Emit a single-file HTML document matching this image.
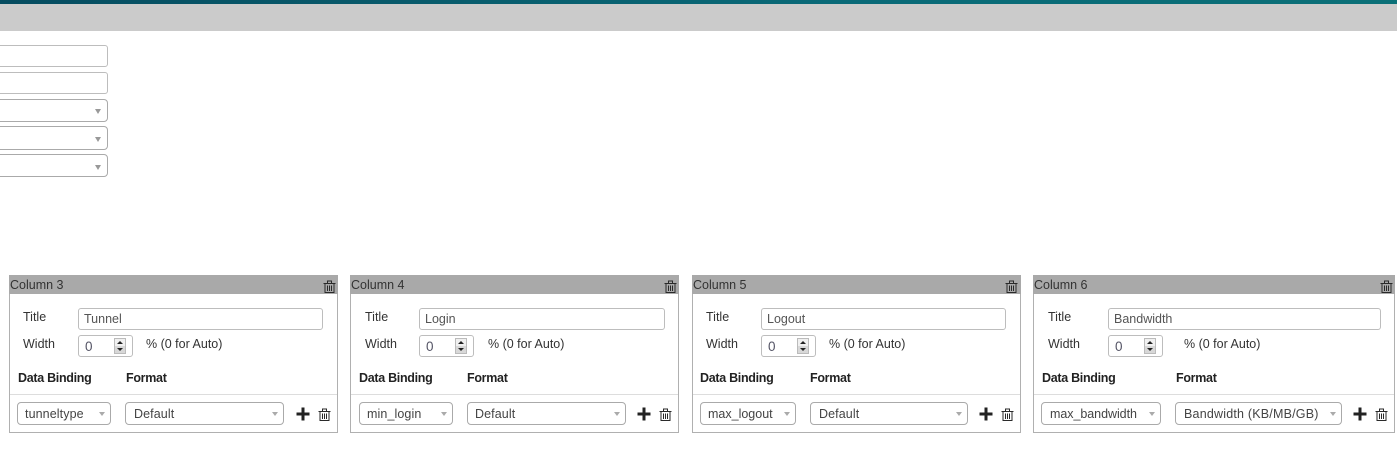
<!DOCTYPE html>
<html><head><meta charset="utf-8"><style>
html,body{margin:0;padding:0;background:#fff;width:1397px;height:473px;overflow:hidden}
body{position:relative;font-family:"Liberation Sans",sans-serif;font-size:12.5px;color:#444}
.a{position:absolute;box-sizing:border-box}
.box{border:1px solid #bdbdbd;border-radius:3px;background:#fff}
.sel{border:1px solid #aaa;border-radius:4px;background:#fff;height:23px;top:402px;line-height:23px;padding-left:8px;white-space:nowrap;overflow:hidden;letter-spacing:.1px}
.arr{position:absolute;width:0;height:0;border-left:3px solid transparent;border-right:3px solid transparent;border-top:5px solid #999}
.low{border-top:4px solid #aaa}
.card{border:1px solid #b0b0b0;top:275px;height:158px}
.hd{background:#a9a9a9;top:275px;height:19px;line-height:20px;color:#333;padding-left:1px}
.lb{line-height:16px;color:#333;white-space:nowrap}
.l1{top:309px}.l2{top:336px}
.b{font-weight:bold;color:#222;line-height:16px;top:370px;letter-spacing:-.3px;white-space:nowrap}
.ln{height:1px;background:#ddd;top:394px}
.in{top:308px;height:22px;line-height:21px;padding-left:5px;color:#555}
.wi{top:335px;height:22px;width:55px;line-height:22px;padding-left:6px;color:#556;font-size:13.5px}
.sp{position:absolute;top:2px;width:12px;height:16px;background:linear-gradient(#f0f0f0 50%,#d8d8d8 50%);border:1px solid #bbb;box-sizing:border-box}
.sp i{position:absolute;left:2px;width:0;height:0;border-left:3px solid transparent;border-right:3px solid transparent}
.sp i.u{top:2px;border-bottom:3px solid #222}.sp i.d{top:9px;border-top:3px solid #222}
svg{position:absolute}
</style></head><body>
<div class="a" style="left:0;top:0;width:1397px;height:4px;background:linear-gradient(90deg,#064c60,#0a6a78 60%,#0b7078)"></div>
<div class="a" style="left:0;top:4px;width:1397px;height:27px;background:#cbcbcb"></div>

<div class="a box" style="left:-6px;top:45px;width:114px;height:22px"></div>
<div class="a box" style="left:-6px;top:72px;width:114px;height:22px"></div>
<div class="a sel" style="left:-6px;top:99px;width:114px;height:23px"><span class="arr" style="left:100px;top:9px"></span></div>
<div class="a sel" style="left:-6px;top:126px;width:114px;height:24px"><span class="arr" style="left:100px;top:10px"></span></div>
<div class="a sel" style="left:-6px;top:154px;width:114px;height:23px"><span class="arr" style="left:100px;top:10px"></span></div>

<svg width="0" height="0" style="position:absolute"><defs>
<symbol id="tr" viewBox="0 0 13 13"><path d="M.5 3.5h12M4.5 3.5v-2.5h4v2.5M2 3.5v9h9v-9M4.5 5.5v5.5M6.5 5.5v5.5M8.5 5.5v5.5" fill="none" stroke="#2a2a2a" stroke-width="1"/></symbol>
<symbol id="pl" viewBox="0 0 14 14"><path d="M7 0.5v13M0.5 7h13" fill="none" stroke="#222" stroke-width="3"/></symbol>
</defs></svg>

<!-- Card 1 -->
<div class="a card" style="left:9px;width:329px"></div>
<div class="a hd" style="left:9px;width:329px">Column 3</div>
<svg style="left:323px;top:280px" width="13" height="13"><use href="#tr"/></svg>
<div class="a lb l1" style="left:23px">Title</div>
<div class="a box in" style="left:78px;width:245px">Tunnel</div>
<div class="a lb l2" style="left:23px">Width</div>
<div class="a box wi" style="left:78px">0<span class="sp" style="left:35px"><i class="u"></i><i class="d"></i></span></div>
<div class="a lb l2" style="left:146px">% (0 for Auto)</div>
<div class="a b" style="left:18px">Data Binding</div>
<div class="a b" style="left:126px">Format</div>
<div class="a ln" style="left:10px;width:327px"></div>
<div class="a sel" style="left:17px;width:94px;padding-left:7px">tunneltype<span class="arr low" style="left:81px;top:9px"></span></div>
<div class="a sel" style="left:125px;width:159px">Default<span class="arr low" style="left:146px;top:9px"></span></div>
<svg style="left:296px;top:407px" width="14" height="14"><use href="#pl"/></svg>
<svg style="left:318px;top:408px" width="13" height="13"><use href="#tr"/></svg>

<!-- Card 2 -->
<div class="a card" style="left:350px;width:329px"></div>
<div class="a hd" style="left:350px;width:329px">Column 4</div>
<svg style="left:664px;top:280px" width="13" height="13"><use href="#tr"/></svg>
<div class="a lb l1" style="left:365px">Title</div>
<div class="a box in" style="left:419px;width:246px">Login</div>
<div class="a lb l2" style="left:365px">Width</div>
<div class="a box wi" style="left:419px">0<span class="sp" style="left:35px"><i class="u"></i><i class="d"></i></span></div>
<div class="a lb l2" style="left:488px">% (0 for Auto)</div>
<div class="a b" style="left:359px">Data Binding</div>
<div class="a b" style="left:467px">Format</div>
<div class="a ln" style="left:351px;width:327px"></div>
<div class="a sel" style="left:359px;width:94px;padding-left:7px">min_login<span class="arr low" style="left:81px;top:9px"></span></div>
<div class="a sel" style="left:467px;width:159px;padding-left:7px">Default<span class="arr low" style="left:146px;top:9px"></span></div>
<svg style="left:637px;top:407px" width="14" height="14"><use href="#pl"/></svg>
<svg style="left:659px;top:408px" width="13" height="13"><use href="#tr"/></svg>

<!-- Card 3 -->
<div class="a card" style="left:692px;width:329px"></div>
<div class="a hd" style="left:692px;width:329px">Column 5</div>
<svg style="left:1005px;top:280px" width="13" height="13"><use href="#tr"/></svg>
<div class="a lb l1" style="left:706px">Title</div>
<div class="a box in" style="left:761px;width:245px">Logout</div>
<div class="a lb l2" style="left:706px">Width</div>
<div class="a box wi" style="left:761px">0<span class="sp" style="left:35px"><i class="u"></i><i class="d"></i></span></div>
<div class="a lb l2" style="left:829px">% (0 for Auto)</div>
<div class="a b" style="left:700px">Data Binding</div>
<div class="a b" style="left:810px">Format</div>
<div class="a ln" style="left:693px;width:327px"></div>
<div class="a sel" style="left:700px;width:96px;padding-left:7px;letter-spacing:0">max_logout<span class="arr low" style="left:83px;top:9px"></span></div>
<div class="a sel" style="left:810px;width:158px">Default<span class="arr low" style="left:145px;top:9px"></span></div>
<svg style="left:979px;top:407px" width="14" height="14"><use href="#pl"/></svg>
<svg style="left:1001px;top:408px" width="13" height="13"><use href="#tr"/></svg>

<!-- Card 4 -->
<div class="a card" style="left:1033px;width:362px"></div>
<div class="a hd" style="left:1033px;width:362px">Column 6</div>
<svg style="left:1380px;top:280px" width="13" height="13"><use href="#tr"/></svg>
<div class="a lb l1" style="left:1048px">Title</div>
<div class="a box in" style="left:1108px;width:273px">Bandwidth</div>
<div class="a lb l2" style="left:1048px">Width</div>
<div class="a box wi" style="left:1108px">0<span class="sp" style="left:35px"><i class="u"></i><i class="d"></i></span></div>
<div class="a lb l2" style="left:1184px">% (0 for Auto)</div>
<div class="a b" style="left:1042px">Data Binding</div>
<div class="a b" style="left:1176px">Format</div>
<div class="a ln" style="left:1034px;width:360px"></div>
<div class="a sel" style="left:1041px;width:120px;letter-spacing:-.05px">max_bandwidth<span class="arr low" style="left:107px;top:9px"></span></div>
<div class="a sel" style="left:1175px;width:167px;letter-spacing:.2px">Bandwidth (KB/MB/GB)<span class="arr low" style="left:154px;top:9px"></span></div>
<svg style="left:1353px;top:407px" width="14" height="14"><use href="#pl"/></svg>
<svg style="left:1375px;top:408px" width="13" height="13"><use href="#tr"/></svg>
</body></html>
